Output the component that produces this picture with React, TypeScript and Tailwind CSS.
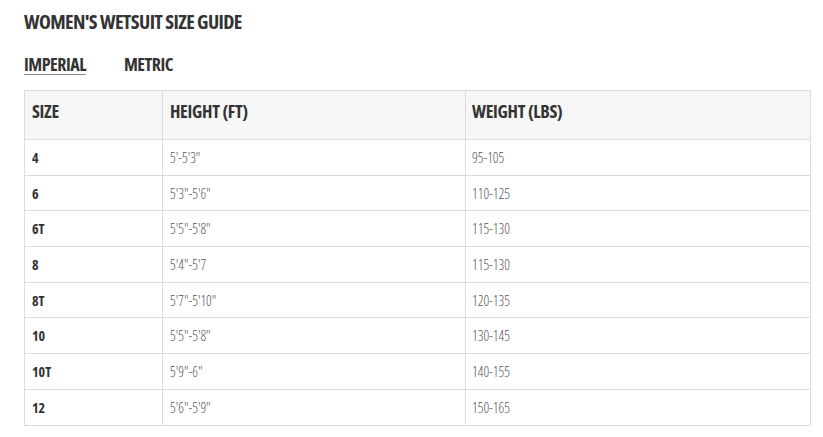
const rows = [
  ["4", "5'-5'3\"", "95-105"],
  ["6", "5'3\"-5'6\"", "110-125"],
  ["6T", "5'5\"-5'8\"", "115-130"],
  ["8", "5'4\"-5'7", "115-130"],
  ["8T", "5'7\"-5'10\"", "120-135"],
  ["10", "5'5\"-5'8\"", "130-145"],
  ["10T", "5'9\"-6\"", "140-155"],
  ["12", "5'6\"-5'9\"", "150-165"],
]

export default function App() {
  return (
    <div className="w-[823px] h-[437px] bg-white text-[#333] font-['Open_Sans',sans-serif] [font-stretch:condensed] overflow-hidden">
      <div className="pl-6 pt-[8px]">
        <h2 className="text-[20px] leading-[28px] font-bold tracking-[-0.6px]">WOMEN'S WETSUIT SIZE GUIDE</h2>
        <div className="flex gap-[38px] mt-[16px] text-[18px] leading-[24px] font-bold tracking-[-0.5px]">
          <span className="underline decoration-[#888] decoration-1 underline-offset-[3px]">IMPERIAL</span>
          <span>METRIC</span>
        </div>
      </div>
      <table className="ml-6 mt-[14px] w-[786px] border-collapse table-fixed">
        <colgroup>
          <col className="w-[138px]" />
          <col className="w-[303px]" />
          <col className="w-[345px]" />
        </colgroup>
        <thead>
          <tr className="h-[49px] bg-[#f7f7f7] text-[18px] font-bold tracking-[-0.3px]">
            <th className="border border-[#dcdcdc] px-[7px] pb-[7px] text-left align-middle">SIZE</th>
            <th className="border border-[#dcdcdc] px-[7px] pb-[7px] text-left align-middle">HEIGHT (FT)</th>
            <th className="border border-[#dcdcdc] px-[6px] pb-[7px] text-left align-middle">WEIGHT (LBS)</th>
          </tr>
        </thead>
        <tbody className="text-[14px]">
          {rows.map((r) => (
            <tr key={r[0]} className="h-[35.7px]">
              <td className="border border-[#dcdcdc] px-[7px] font-bold">{r[0]}</td>
              <td className="border border-[#dcdcdc] px-[7px] font-light text-[#555]">{r[1]}</td>
              <td className="border border-[#dcdcdc] px-[6px] font-light text-[#555]">{r[2]}</td>
            </tr>
          ))}
        </tbody>
      </table>
    </div>
  )
}
